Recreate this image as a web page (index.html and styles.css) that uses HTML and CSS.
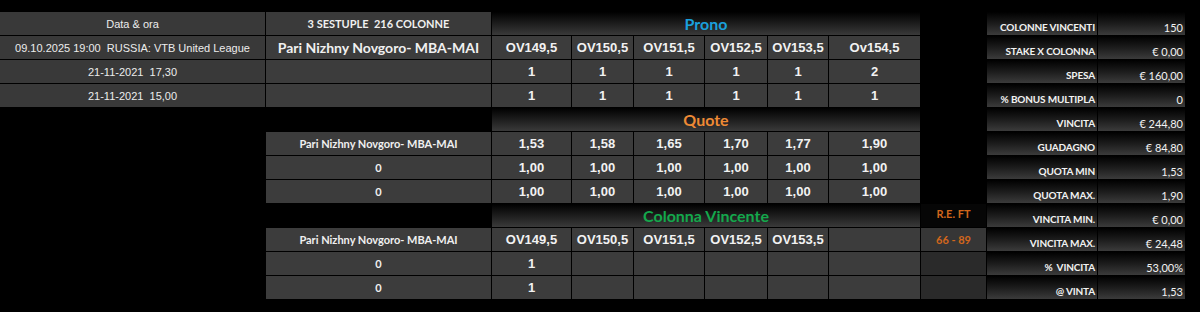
FILE: index.html
```html
<!DOCTYPE html>
<html lang="it">
<head>
<meta charset="utf-8">
<title>Sestuple</title>
<link rel="stylesheet" href="styles.css">
</head>
<body>
<div class="sheet">
  <div class="main">
    <!-- row 1 -->
    <div class="cell info">Data &amp; ora</div>
    <div class="cell cal caps">3 SESTUPLE  216 COLONNE</div>
    <div class="cell head prono">Prono</div>
    <div class="void"></div>
    <!-- row 2 -->
    <div class="cell info">09.10.2025 19:00  RUSSIA: VTB United League</div>
    <div class="cell cal team">Pari Nizhny Novgoro- MBA-MAI</div>
    <div class="cell num">OV149,5</div>
    <div class="cell num">OV150,5</div>
    <div class="cell num">OV151,5</div>
    <div class="cell num">OV152,5</div>
    <div class="cell num">OV153,5</div>
    <div class="cell num">Ov154,5</div>
    <div class="void"></div>
    <!-- row 3 -->
    <div class="cell info">21-11-2021  17,30</div>
    <div class="cell"></div>
    <div class="cell num">1</div>
    <div class="cell num">1</div>
    <div class="cell num">1</div>
    <div class="cell num">1</div>
    <div class="cell num">1</div>
    <div class="cell num">2</div>
    <div class="void"></div>
    <!-- row 4 -->
    <div class="cell info">21-11-2021  15,00</div>
    <div class="cell"></div>
    <div class="cell num">1</div>
    <div class="cell num">1</div>
    <div class="cell num">1</div>
    <div class="cell num">1</div>
    <div class="cell num">1</div>
    <div class="cell num">1</div>
    <div class="void"></div>
    <!-- row 5 -->
    <div class="void"></div>
    <div class="void"></div>
    <div class="cell head quote">Quote</div>
    <div class="void"></div>
    <!-- row 6 -->
    <div class="void"></div>
    <div class="cell cal small">Pari Nizhny Novgoro- MBA-MAI</div>
    <div class="cell num">1,53</div>
    <div class="cell num">1,58</div>
    <div class="cell num">1,65</div>
    <div class="cell num">1,70</div>
    <div class="cell num">1,77</div>
    <div class="cell num">1,90</div>
    <div class="void"></div>
    <!-- row 7 -->
    <div class="void"></div>
    <div class="cell cal small">0</div>
    <div class="cell num">1,00</div>
    <div class="cell num">1,00</div>
    <div class="cell num">1,00</div>
    <div class="cell num">1,00</div>
    <div class="cell num">1,00</div>
    <div class="cell num">1,00</div>
    <div class="void"></div>
    <!-- row 8 -->
    <div class="void"></div>
    <div class="cell cal small">0</div>
    <div class="cell num">1,00</div>
    <div class="cell num">1,00</div>
    <div class="cell num">1,00</div>
    <div class="cell num">1,00</div>
    <div class="cell num">1,00</div>
    <div class="cell num">1,00</div>
    <div class="void"></div>
    <!-- row 9 -->
    <div class="void"></div>
    <div class="void"></div>
    <div class="cell head win">Colonna Vincente</div>
    <div class="cell ref ref-head">R.E. FT</div>
    <!-- row 10 -->
    <div class="void"></div>
    <div class="cell cal small">Pari Nizhny Novgoro- MBA-MAI</div>
    <div class="cell num">OV149,5</div>
    <div class="cell num">OV150,5</div>
    <div class="cell num">OV151,5</div>
    <div class="cell num">OV152,5</div>
    <div class="cell num">OV153,5</div>
    <div class="cell"></div>
    <div class="cell ref ref-score">66 - 89</div>
    <!-- row 11 -->
    <div class="void"></div>
    <div class="cell cal small">0</div>
    <div class="cell num">1</div>
    <div class="cell"></div>
    <div class="cell"></div>
    <div class="cell"></div>
    <div class="cell"></div>
    <div class="cell"></div>
    <div class="cell ref ref-empty"></div>
    <!-- row 12 -->
    <div class="void"></div>
    <div class="cell cal small">0</div>
    <div class="cell num">1</div>
    <div class="cell"></div>
    <div class="cell"></div>
    <div class="cell"></div>
    <div class="cell"></div>
    <div class="cell"></div>
    <div class="cell ref ref-empty"></div>
  </div>

  <div class="summary">
    <div class="sum label">COLONNE VINCENTI</div><div class="sum value">150</div>
    <div class="sum label">STAKE X COLONNA</div><div class="sum value">€ 0,00</div>
    <div class="sum label">SPESA</div><div class="sum value">€ 160,00</div>
    <div class="sum label">% BONUS MULTIPLA</div><div class="sum value">0</div>
    <div class="sum label">VINCITA</div><div class="sum value">€ 244,80</div>
    <div class="sum label">GUADAGNO</div><div class="sum value">€ 84,80</div>
    <div class="sum label">QUOTA MIN</div><div class="sum value">1,53</div>
    <div class="sum label">QUOTA MAX.</div><div class="sum value">1,90</div>
    <div class="sum label">VINCITA MIN.</div><div class="sum value">€ 0,00</div>
    <div class="sum label">VINCITA MAX.</div><div class="sum value">€ 24,48</div>
    <div class="sum label">%  VINCITA</div><div class="sum value">53,00%</div>
    <div class="sum label">@ VINTA</div><div class="sum value">1,53</div>
  </div>
</div>
</body>
</html>
```

FILE: styles.css
```css
html, body {
  margin: 0;
  padding: 0;
  background: #000;
}

.sheet {
  display: flex;
  align-items: flex-start;
  gap: 1px;
  padding-top: 12px;
  color: #f0f0f0;
}

.main {
  display: grid;
  grid-template-columns: 265px 225px 79px 61px 70px 62px 60px 91px 65px;
  grid-auto-rows: 23px;
  gap: 1px;
}

.cell {
  background: #3c3c3c;
  display: flex;
  align-items: center;
  justify-content: center;
  white-space: pre;
  overflow: hidden;
}

.void {
  background: transparent;
}

.info {
  background: #393939;
  font-family: "Liberation Sans", Arial, sans-serif;
  font-size: 11px;
  color: #ececec;
}

.cal {
  font-family: Lato, "Noto Sans", sans-serif;
  font-weight: 700;
}

.caps {
  font-size: 11px;
  background: #3a3a3a;
}

.team {
  font-size: 14px;
}

.small {
  font-size: 11px;
}

.num {
  font-family: "Liberation Sans", Arial, sans-serif;
  font-weight: 700;
  font-size: 13px;
  color: #f2f2f2;
}

.head {
  grid-column: span 6;
  background: linear-gradient(#000 0%, #1a1a1a 45%, #3a3a3a 100%);
  font-family: Lato, "Noto Sans", sans-serif;
  font-weight: 700;
  font-size: 16px;
}

.prono { color: #1aa0dc; }
.quote { color: #ee8a35; }
.win   { color: #14a84c; }

.ref {
  font-family: Lato, "Noto Sans", sans-serif;
  font-weight: 700;
  font-size: 11px;
  color: #d2661c;
}

.ref-head {
  background: #060606;
  align-items: flex-start;
  padding-top: 3px;
}

.ref-score {
  background: #363636;
}

.ref-empty {
  background: #2a2a2a;
}

.summary {
  display: grid;
  grid-template-columns: 110px 87px;
  grid-auto-rows: 23px;
  gap: 1px;
}

.sum {
  background: linear-gradient(#000 0%, #1c1c1c 50%, #3b3b3b 100%);
  display: flex;
  align-items: flex-end;
  justify-content: flex-end;
  padding: 0 2px 1px 0;
  font-family: Lato, "Noto Sans", sans-serif;
  font-size: 11px;
  line-height: 13px;
  white-space: pre;
  color: #f2f2f2;
}

.label {
  font-weight: 700;
  font-size: 10px;
  letter-spacing: -0.15px;
}

.value {
  font-weight: 400;
}
```
